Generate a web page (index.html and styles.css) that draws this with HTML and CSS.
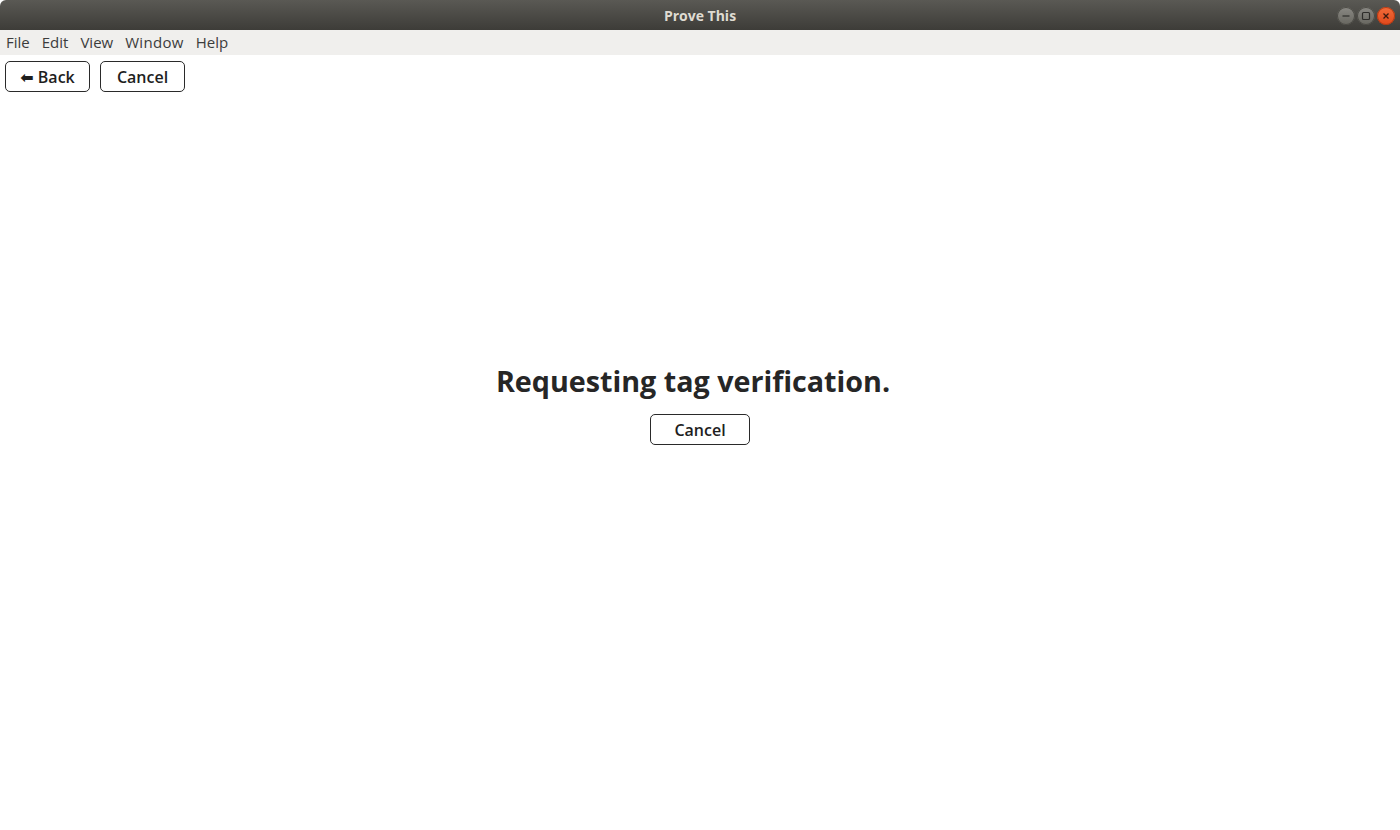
FILE: index.html
```html
<!DOCTYPE html>
<html>
<head>
<meta charset="utf-8">
<link rel="stylesheet" href="styles.css">
</head>
<body>
<div class="window">
  <header class="titlebar">
    <div class="title">Prove This</div>
    <div class="controls">
      <span class="ctl ctl-min"><svg width="14" height="14" viewBox="0 0 14 14"><line x1="3.5" y1="7" x2="10.5" y2="7" stroke="#2e2d2a" stroke-width="1.2"/></svg></span>
      <span class="ctl ctl-max"><svg width="14" height="14" viewBox="0 0 14 14"><rect x="3.5" y="3.5" width="7" height="7" rx="1" fill="none" stroke="#2e2d2a" stroke-width="1.2"/></svg></span>
      <span class="ctl ctl-close"><svg width="14" height="14" viewBox="0 0 14 14"><path d="M4.5 4.5 L9.5 9.5 M9.5 4.5 L4.5 9.5" stroke="#3a1a10" stroke-width="1.3"/></svg></span>
    </div>
  </header>
  <nav class="menubar">
    <span>File</span><span>Edit</span><span>View</span><span class="wide">Window</span><span>Help</span>
  </nav>
  <div class="toolbar">
    <button class="btn btn-back">&#11013; Back</button>
    <button class="btn btn-cancel">Cancel</button>
  </div>
  <main class="content">
    <h1 class="heading">Requesting tag verification.</h1>
    <button class="btn btn-center">Cancel</button>
  </main>
</div>
</body>
</html>
```

FILE: styles.css
```css
html, body {
  margin: 0;
  padding: 0;
  width: 1400px;
  height: 830px;
  overflow: hidden;
  background: #ffffff;
  font-family: "Open Sans", "DejaVu Sans", sans-serif;
}
.window {
  display: flex;
  flex-direction: column;
  height: 830px;
}
.titlebar {
  height: 30px;
  background: linear-gradient(#5a5954, #3d3c38);
  display: flex;
  align-items: center;
  justify-content: center;
  position: relative;
  border-radius: 6px 6px 0 0;
}
.title {
  color: #dfdbd2;
  font-weight: bold;
  font-size: 14px;
}
.controls {
  position: absolute;
  right: 5px;
  top: 7px;
  display: flex;
  gap: 2px;
}
.ctl {
  width: 18px;
  height: 18px;
  border-radius: 50%;
  display: flex;
  align-items: center;
  justify-content: center;
  background: linear-gradient(#8a8984, #67665f);
  box-shadow: inset 0 0 0 1px #4a4944;
}
.ctl-close {
  background: linear-gradient(#f36c3a, #e0481b);
  box-shadow: inset 0 0 0 1px #b23a14;
}
.menubar {
  height: 25px;
  box-sizing: border-box;
  padding-bottom: 2px;
  background: #f0efed;
  display: flex;
  align-items: center;
  padding-left: 6px;
  gap: 12px;
  font-size: 15px;
  color: #3c3c3c;
}
.menubar .wide { letter-spacing: 0.3px; }
.toolbar {
  display: flex;
  gap: 10px;
  padding: 6px 5px 0;
}
.btn {
  font-family: "Open Sans", "DejaVu Sans", sans-serif;
  font-weight: 600;
  font-size: 16px;
  color: #1e1e1e;
  background: #ffffff;
  border: 1px solid #2a2a2a;
  border-radius: 5px;
  height: 31px;
  padding: 0;
  cursor: pointer;
}
.btn-back { width: 85px; }
.btn-cancel { width: 85px; }
.content {
  display: flex;
  flex-direction: column;
  align-items: center;
  padding-top: 269px;
}
.heading {
  margin: 0 14px 0 0;
  font-size: 28.7px;
  font-weight: bold;
  color: #262626;
  line-height: 40px;
}
.btn-center {
  width: 100px;
  margin-top: 13px;
}
```
